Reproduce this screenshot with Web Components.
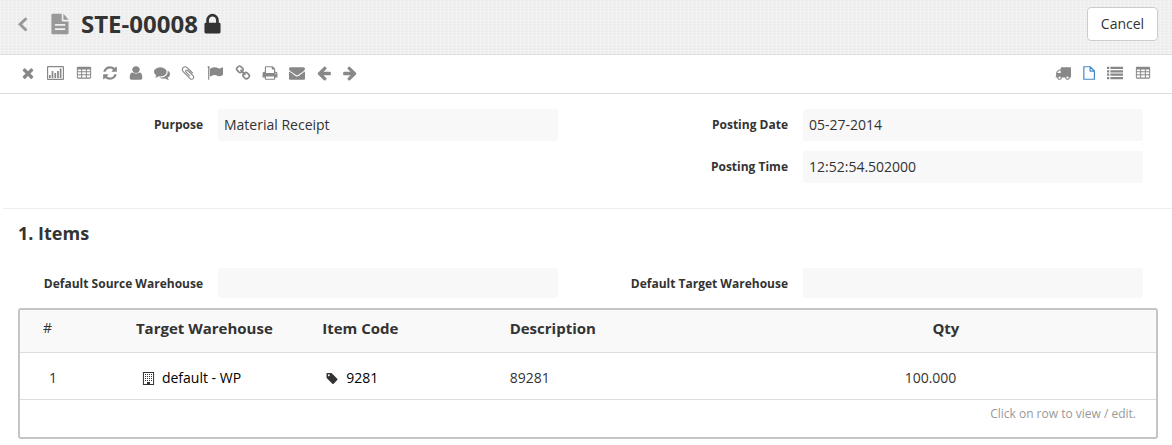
<!DOCTYPE html>
<html lang="en">
<head>
<meta charset="utf-8">
<title>STE-00008</title>
<style>
body { margin: 0; background: #fff; color: #333; font: 14px/20px "Open Sans", "Noto Sans", sans-serif; }
</style>
</head>
<body>
<stock-entry-page></stock-entry-page>
<script>
const solid = d => `<path d="${d}"/>`;
const grid = '<path fill-rule="evenodd" d="M224 192H1568Q1696 192 1696 320V1408Q1696 1536 1568 1536H224Q96 1536 96 1408V320Q96 192 224 192ZM208 512V704H576V512ZM688 512V704H1104V512ZM1216 512V704H1584V512ZM208 816V1040H576V816ZM688 816V1040H1104V816ZM1216 816V1040H1584V816ZM208 1152V1408H576V1152ZM688 1152V1408H1104V1152ZM1216 1152V1408H1584V1152Z"/>';
const ICONS = {
  remove: solid("M1490 1322q0 40-28 68l-136 136q-28 28-68 28t-68-28l-294-294-294 294q-28 28-68 28t-68-28l-136-136q-28-28-28-68t28-68l294-294-294-294q-28-28-28-68t28-68l136-136q28-28 68-28t68 28l294 294 294-294q28-28 68-28t68 28l136 136q28 28 28 68t-28 68l-294 294 294 294q28 28 28 68z"),
  chart: '<path fill-rule="evenodd" d="M112 112H1792Q1904 112 1904 224V1568Q1904 1680 1792 1680H112Q0 1680 0 1568V224Q0 112 112 112ZM130 240V1552H1774V240ZM224 1120H414V1456H224ZM520 672H710V1456H520ZM830 896H1020V1456H830ZM1130 672H1320V1456H1130ZM1430 400H1620V1456H1430Z"/>',
  table: grid,
  refresh: solid("M1639 1056q0 5-1 7-64 268-268 434.5t-478 166.5q-146 0-282.5-55t-243.5-157l-129 129q-19 19-45 19t-45-19-19-45v-448q0-26 19-45t45-19h448q26 0 45 19t19 45-19 45l-137 137q71 66 161 102t187 36q134 0 250-65t186-179q11-17 53-117 8-23 30-23h192q13 0 22.5 9.5t9.5 22.5zm25-800v448q0 26-19 45t-45 19h-448q-26 0-45-19t-19-45 19-45l138-138q-148-137-349-137-134 0-250 65t-186 179q-11 17-53 117-8 23-30 23h-199q-13 0-22.5-9.5t-9.5-22.5v-7q65-268 270-434.5t480-166.5q146 0 284 55.5t245 156.5l130-129q19-19 45-19t45 19 19 45z"),
  user: '<path transform="translate(-90 0) scale(1.1 1)" d="M1536 1399q0 109-62.5 187t-150.5 78h-854q-88 0-150.5-78t-62.5-187q0-85 8.5-160.5t31.5-152 58.5-131 94-89 134.5-34.5q131 128 313 128t313-128q76 0 134.5 34.5t94 89 58.5 131 31.5 152 8.5 160.5zm-256-887q0 159-112.5 271.5t-271.5 112.5-271.5-112.5-112.5-271.5 112.5-271.5 271.5-112.5 271.5 112.5 112.5 271.5z"/>',
  comments: solid("M1408 768q0 139-94 257t-256.5 186.5-353.5 68.5q-86 0-176-16-124 88-278 128-36 9-86 16h-3q-11 0-20.5-8t-11.5-21q-1-3-1-6.5t.5-6.5 2-6l2.5-5 3.5-5.5 4-5 4.5-5 4-4.5q5-6 23-25t26-29.5 22.5-29 25-38.5 20.5-44q-124-72-195-177t-71-224q0-139 94-257t256.5-186.5 353.5-68.5 353.5 68.5 256.5 186.5 94 257zm384 256q0 120-71 224.5t-195 176.5q10 24 20.5 44t25 38.5 22.5 29 26 29.5 23 25q1 1 4 4.5t4.5 5 4 5 3.5 5.5l2.5 5 2 6 .5 6.5-1 6.5q-3 14-13 22t-22 7q-50-7-86-16-154-40-278-128-90 16-176 16-271 0-472-132 58 4 88 4 161 0 309-45t264-129q125-92 192-212t67-254q0-77-23-152 129 71 204 178t75 230z"),
  clip: solid("M1596 1385q0 117-79 196t-196 79q-135 0-235-100l-777-776q-113-115-113-271 0-159 110-270t269-111q158 0 273 113l605 606q10 10 10 22 0 16-30.5 46.5t-46.5 30.5q-13 0-23-10l-606-607q-79-77-181-77-106 0-179 75t-73 181q0 105 76 181l776 777q63 63 145 63 64 0 106-42t42-106q0-82-63-145l-581-581q-26-24-60-24-29 0-48 19t-19 48q0 32 25 59l410 410q10 10 10 22 0 16-31 47t-47 31q-12 0-22-10l-410-410q-63-61-63-149 0-82 57-139t139-57q88 0 149 63l581 581q100 98 100 235z"),
  flag: solid("M320 256q0 72-64 110v1266q0 13-9.5 22.5t-22.5 9.5h-64q-13 0-22.5-9.5t-9.5-22.5v-1266q-64-38-64-110 0-53 37.5-90.5t90.5-37.5 90.5 37.5 37.5 90.5zm1472 64v763q0 25-12.5 38.5t-39.5 27.5q-215 116-369 116-61 0-123.5-22t-108.5-48-115.5-48-142.5-22q-192 0-464 146-17 9-33 9-26 0-45-19t-19-45v-742q0-32 31-55 21-14 79-43 236-120 421-120 107 0 200 29t219 88q38 19 88 19 54 0 117.5-21t110-47 88-47 54.5-21q26 0 45 19t19 45z"),
  link: solid("M1520 1216q0-40-28-68l-208-208q-28-28-68-28-42 0-72 32 3 3 19 18.5t21.5 21.5 15 19 13 25.5 3.5 27.5q0 40-28 68t-68 28q-15 0-27.5-3.5t-25.5-13-19-15-21.5-21.5-18.5-19q-33 31-33 73 0 40 28 68l206 207q27 27 68 27 40 0 68-26l147-146q28-28 28-67zm-703-705q0-40-28-68l-206-207q-28-28-68-28-39 0-68 27l-147 146q-28 28-28 67 0 40 28 68l208 208q27 27 68 27 42 0 72-31-3-3-19-18.5t-21.5-21.5-15-19-13-25.5-3.5-27.5q0-40 28-68t68-28q15 0 27.5 3.5t25.5 13 19 15 21.5 21.5 18.5 19q33-31 33-73zm895 705q0 120-85 203l-147 146q-83 83-203 83-121 0-204-85l-206-207q-83-83-83-203 0-123 88-209l-88-88q-86 88-208 88-120 0-204-84l-208-208q-84-84-84-204t85-203l147-146q83-83 203-83 121 0 204 85l206 207q83 83 83 203 0 123-88 209l88 88q86-88 208-88 120 0 204 84l208 208q84 84 84 204z"),
  print: solid("M448 1536h896v-256h-896v256zm0-640h896v-384h-160q-40 0-68-28t-28-68v-160h-640v640zm1152 64q0-26-19-45t-45-19-45 19-19 45 19 45 45 19 45-19 19-45zm128 0v416q0 13-9.5 22.5t-22.5 9.5h-224v160q0 40-28 68t-68 28h-960q-40 0-68-28t-28-68v-160h-224q-13 0-22.5-9.5t-9.5-22.5v-416q0-79 56.5-135.5t135.5-56.5h64v-544q0-40 28-68t68-28h672q40 0 88 20t76 48l152 152q28 28 48 76t20 88v256h64q79 0 135.5 56.5t56.5 135.5z"),
  mail: solid("M1792 710v794q0 66-47 113t-113 47h-1472q-66 0-113-47t-47-113v-794q44 49 101 87 362 246 497 345 57 42 92.5 65.5t94.5 48 110 24.5h2q51 0 110-24.5t94.5-48 92.5-65.5q170-123 498-345 57-39 100-87zm0-294q0 79-49 151t-122 123q-376 261-468 325-10 7-42.5 31t-54 38.5-52 32.5-57.5 27-50 9h-2q-23 0-50-9t-57.5-27-52-32.5-54-38.5-42.5-31q-91-64-262-182.5t-205-142.5q-62-42-117-115.5t-55-136.5q0-78 41.5-130t118.5-52h1472q65 0 112.5 47t47.5 113z"),
  left: solid("M1664 896v128q0 53-32.5 90.5t-84.5 37.5h-704l293 294q38 36 38 90t-38 90l-75 76q-37 37-90 37-52 0-91-37l-651-652q-37-37-37-90 0-52 37-91l651-650q38-38 91-38 52 0 90 38l75 74q38 38 38 91t-38 91l-293 293h704q52 0 84.5 37.5t32.5 90.5z"),
  right: solid("M1600 960q0 54-37 91l-651 651q-39 37-91 37-51 0-90-37l-75-75q-38-38-38-91t38-91l293-293h-704q-52 0-84.5-37.5t-32.5-90.5v-128q0-53 32.5-90.5t84.5-37.5h704l-293-294q-38-36-38-90t38-90l75-75q38-38 90-38 53 0 91 38l651 651q37 35 37 90z"),
  truck: solid("M640 1408q0-52-38-90t-90-38-90 38-38 90 38 90 90 38 90-38 38-90zm-384-512h384v-256h-158q-13 0-22 9l-195 195q-9 9-9 22v30zm1280 512q0-52-38-90t-90-38-90 38-38 90 38 90 90 38 90-38 38-90zm256-1088v1024q0 15-4 26.5t-13.5 18.5-16.5 11.5-23.5 6-22.5 2-25.5 0-22.5-.5q0 106-75 181t-181 75-181-75-75-181h-384q0 106-75 181t-181 75-181-75-75-181h-64q-3 0-22.5.5t-25.5 0-22.5-2-23.5-6-16.5-11.5-13.5-18.5-4-26.5q0-26 19-45t45-19v-320q0-8-.5-35t0-38 2.5-34.5 6.5-37 14-30.5 22.5-30l198-198q19-19 50.5-32t58.5-13h160v-192q0-26 19-45t45-19h1024q26 0 45 19t19 45z"),
  page: '<path fill="none" stroke="currentColor" stroke-width="136" stroke-linejoin="round" d="M320 196H1020L1500 676V1596H320ZM1020 196V676H1500"/>',
  list: '<path d="M0 192H256V448H0ZM384 192H1792V448H384ZM0 576H256V832H0ZM384 576H1792V832H384ZM0 960H256V1216H0ZM384 960H1792V1216H384ZM0 1344H256V1600H0ZM384 1344H1792V1600H384Z"/>',
  lock: solid("M640 768h512v-192q0-106-75-181t-181-75-181 75-75 181v192zm832 96v576q0 40-28 68t-68 28h-960q-40 0-68-28t-28-68v-576q0-40 28-68t68-28h32v-192q0-184 132-316t316-132 316 132 132 316v192h32q40 0 68 28t28 68z"),
  tag: '<path transform="translate(-60 0)" d="M576 448q0-53-37.5-90.5t-90.5-37.5-90.5 37.5-37.5 90.5 37.5 90.5 90.5 37.5 90.5-37.5 37.5-90.5zm1067 576q0 53-37 90l-491 492q-39 37-91 37-53 0-90-37l-715-716q-38-37-64.5-101t-26.5-117v-416q0-52 38-90t90-38h416q53 0 117 26.5t102 64.5l715 714q37 39 37 91z"/>',
  back: '<path fill="none" stroke="currentColor" stroke-width="290" d="M1240 320L600 930L1240 1540"/>',
  file: '<path fill-rule="evenodd" d="M352 128H1024V608Q1024 704 1120 704H1536V1568Q1536 1664 1440 1664H352Q256 1664 256 1568V224Q256 128 352 128ZM1152 128L1536 576H1152ZM512 896V1024H1280V896ZM512 1216V1344H1280V1216Z"/>',
  building: '<path fill-rule="evenodd" d="M128 0H1664V1792H128ZM266 138V1654H690V1378H1102V1654H1526V138Z"/><path fill="none" stroke="currentColor" stroke-width="138" stroke-dasharray="138 138" d="M414 345H1400M414 621H1400M414 897H1400M414 1173H1400"/>'
};

class UiIcon extends HTMLElement {
  constructor() {
    super();
    this.attachShadow({ mode: "open" }).innerHTML = `
      <style>
        :host { display: inline-flex; flex: none; justify-content: center; width: var(--icon-size, 16px); height: var(--icon-size, 16px); }
        svg { flex: none; width: var(--icon-size, 16px); height: var(--icon-size, 16px); fill: currentColor; overflow: visible; }
      </style>
      <svg viewBox="0 0 1792 1792" aria-hidden="true">${ICONS[this.getAttribute("name")]}</svg>`;
  }
}
customElements.define("ui-icon", UiIcon);

class ToolButton extends HTMLElement {
  constructor() {
    super();
    this.attachShadow({ mode: "open" }).innerHTML = `
      <style>
        :host { display: block; flex: none; color: #888; }
        :host([active]) { color: #428bca; }
        button { display: flex; justify-content: center; align-items: center; width: 100%; height: 16px; margin: 0; padding: 0; border: 0; background: none; color: inherit; cursor: pointer; }
      </style>
      <button type="button" aria-label="${this.getAttribute("label")}"><ui-icon name="${this.getAttribute("icon")}"></ui-icon></button>`;
  }
}
customElements.define("tool-button", ToolButton);

class PageHeader extends HTMLElement {
  constructor() {
    super();
    this.attachShadow({ mode: "open" }).innerHTML = `
      <style>
        :host { display: flex; align-items: center; padding: 0 14px 6px; box-sizing: border-box; height: 55px; border-bottom: 1px solid #ddd;
          background: repeating-linear-gradient(90deg, rgba(255,255,255,.3) 0 1px, transparent 1px 4px), repeating-linear-gradient(0deg, rgba(255,255,255,.3) 0 1px, transparent 1px 3px), #ededed; }
        a { display: flex; width: 18px; color: #999; --icon-size: 18px; }
        .file { margin: 0 9px 0 16px; color: #999; --icon-size: 24px; }
        h1 { flex: 1; display: flex; align-items: center; gap: 2px; margin: 0; font-size: 24px; line-height: 32px; font-weight: 700; --icon-size: 25px; }
        button { height: 34px; padding: 0 12px; min-width: 71px; border: 1px solid #ccc; border-radius: 4px; background: #fff; color: #333; font: inherit; cursor: pointer; }
      </style>
      <a href="#list" aria-label="Back"><ui-icon name="back"></ui-icon></a>
      <ui-icon class="file" name="file"></ui-icon>
      <h1><slot></slot><ui-icon name="lock"></ui-icon></h1>
      <button type="button">Cancel</button>`;
  }
}
customElements.define("page-header", PageHeader);

const TOOLS = [["remove", "Close", 12], ["chart", "Report", 18], ["table", "Grid", 15], ["refresh", "Refresh", 14], ["user", "Assign", 13], ["comments", "Comments", 16], ["clip", "Attach", 12], ["flag", "Flag", 17], ["link", "Links", 15], ["print", "Print", 15], ["mail", "Email", 16], ["left", "Previous", 14], ["right", "Next", 14]];
const VIEWS = [["truck", "Stock", 16], ["page", "Form", 12], ["list", "List", 16], ["table", "Report view", 15]];
const tools = list => list.map(([icon, label, w]) => `<tool-button style="width:${w}px" icon="${icon}" label="${label}"${icon === "page" ? " active" : ""}></tool-button>`).join("");

class PageToolbar extends HTMLElement {
  constructor() {
    super();
    this.attachShadow({ mode: "open" }).innerHTML = `
      <style>
        :host { display: flex; justify-content: space-between; align-items: center; height: 36px; padding: 0 22px 2px; border-bottom: 1px solid #ddd; }
        div { display: flex; gap: 12px; }
      </style>
      <div>${tools(TOOLS)}</div><div>${tools(VIEWS)}</div>`;
  }
}
customElements.define("page-toolbar", PageToolbar);

class FormField extends HTMLElement {
  constructor() {
    super();
    this.attachShadow({ mode: "open" }).innerHTML = `
      <style>
        :host { display: grid; grid-template-columns: 185px 1fr; gap: 15px; align-items: start; }
        label { padding-top: 6px; text-align: right; font-size: 12px; font-weight: 700; white-space: nowrap; }
        input { width: 100%; min-width: 0; height: var(--field-height, 32px); box-sizing: border-box; margin: 0; padding: 0 6px 2px; border: 0; border-radius: 3px; background: #f8f8f8; color: #333; font: inherit; outline: 0; }
      </style>
      <label for="value">${this.getAttribute("label")}</label>
      <input id="value" type="text" readonly value="${this.getAttribute("value") || ""}">`;
  }
}
customElements.define("form-field", FormField);

class FormSection extends HTMLElement {
  constructor() {
    super();
    this.attachShadow({ mode: "open" }).innerHTML = `
      <style>
        :host { display: grid; grid-template-columns: 1fr 1fr; gap: 45px; align-items: start; padding: 0 29px 0 18px; }
        div { display: grid; gap: 10px; }
      </style>
      <div><slot name="left"></slot></div><div><slot name="right"></slot></div>`;
  }
}
customElements.define("form-section", FormSection);

class ItemsTable extends HTMLElement {
  constructor() {
    super();
    this.attachShadow({ mode: "open" }).innerHTML = `
      <style>
        :host { display: block; border: 2px solid #c5c5c5; border-radius: 3px; }
        table { width: 100%; border-collapse: separate; border-spacing: 0; table-layout: fixed; }
        th, td { padding: 0 8px; box-sizing: border-box; border-bottom: 1px solid #ddd; text-align: left; white-space: nowrap; }
        th { height: 43px; padding-bottom: 6px; background: #f9f9f9; font-size: 15px; font-weight: 700; }
        td { height: 47px; padding-top: 4px; }
        th:first-child { padding-left: 23px; font-size: 14px; font-weight: 400; }
        td:first-child { padding-left: 29px; }
        .number { text-align: right; }
        td.number { padding-right: 11px; }
        a { display: flex; align-items: center; gap: 7px; padding-left: 6px; color: #000; text-decoration: none; --icon-size: 13px; }
        .item { padding-left: 4px; }
        ui-icon { color: #333; }
        p { margin: 0; padding: 4px 20px 13px; text-align: right; font-size: 12px; color: #999; }
      </style>
      <table>
        <colgroup><col style="width:9.5%"><col style="width:16.4%"><col style="width:16.5%"><col style="width:25%"><col style="width:16%"><col></colgroup>
        <thead><tr><th>#</th><th>Target Warehouse</th><th>Item Code</th><th>Description</th><th class="number">Qty</th><th></th></tr></thead>
        <tbody><tr><td>1</td><td><a href="#warehouse"><ui-icon name="building"></ui-icon>default - WP</a></td><td><a class="item" href="#item"><ui-icon name="tag"></ui-icon>9281</a></td><td>89281</td><td class="number">100.000</td><td></td></tr></tbody>
      </table>
      <p>Click on row to view / edit.</p>`;
  }
}
customElements.define("items-table", ItemsTable);

class StockEntryPage extends HTMLElement {
  constructor() {
    super();
    this.attachShadow({ mode: "open" }).innerHTML = `
      <style>
        :host { display: block; }
        main { padding-top: 15px; }
        hr { margin: 25px 0 0 3px; border: 0; border-top: 1px solid #eee; }
        h2 { margin: 14px 18px 25px; font-size: 18px; line-height: 20px; font-weight: 700; }
        .warehouses { --field-height: 30px; }
        items-table { margin: 10px 14px 6px 18px; }
      </style>
      <page-header>STE-00008</page-header>
      <page-toolbar></page-toolbar>
      <main>
        <form-section>
          <form-field slot="left" label="Purpose" value="Material Receipt"></form-field>
          <form-field slot="right" label="Posting Date" value="05-27-2014"></form-field>
          <form-field slot="right" label="Posting Time" value="12:52:54.502000"></form-field>
        </form-section>
        <hr>
        <h2>1. Items</h2>
        <form-section class="warehouses">
          <form-field slot="left" label="Default Source Warehouse"></form-field>
          <form-field slot="right" label="Default Target Warehouse"></form-field>
        </form-section>
        <items-table></items-table>
      </main>`;
  }
}
customElements.define("stock-entry-page", StockEntryPage);
</script>
</body>
</html>
